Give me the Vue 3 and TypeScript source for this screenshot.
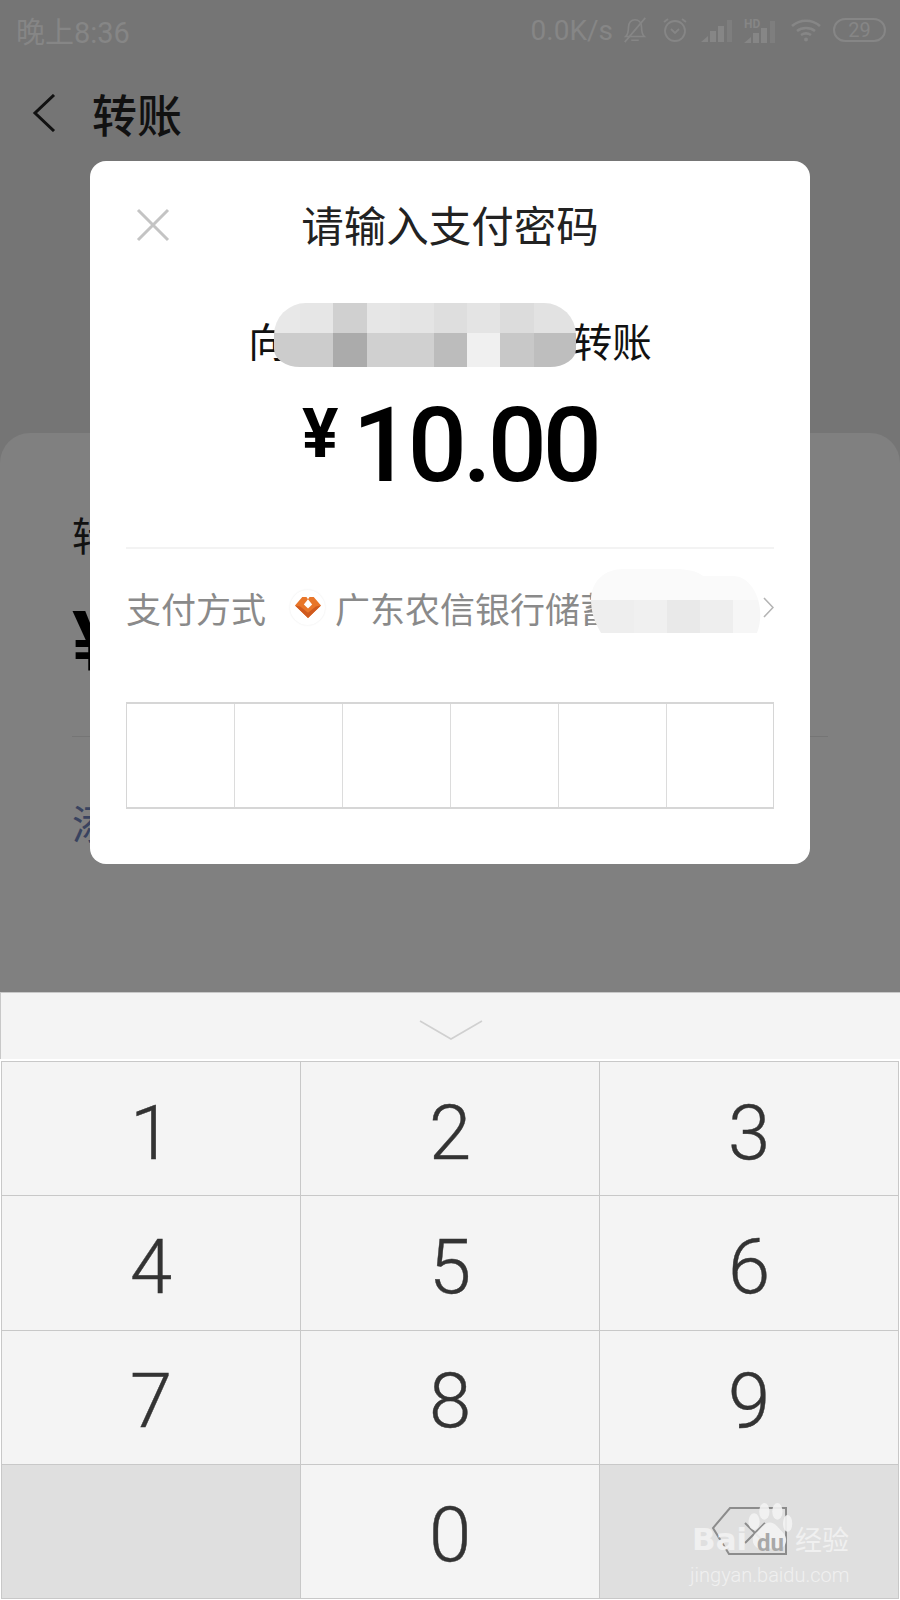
<template>
  <div class="page">
    <div class="screen">
      <div class="status-bar">
        <span class="status-time">晚上8:36</span>
        <div class="status-right">
          <span class="speed">0.0K/s</span>
          <svg width="28" height="28" viewBox="0 0 30 28" fill="none" stroke="#868686" stroke-width="1.800">
            <path d="M5 21c2-2 3-5 3-10s3-8 7-8 7 3 7 8 1 8 3 10z" />
            <path d="M11 25h8M4 27 26 1" />
          </svg>
          <svg width="28" height="28" viewBox="0 0 28 28" fill="none" stroke="#868686" stroke-width="1.800">
            <circle cx="14" cy="15" r="10" />
            <path d="M10 13l4 4 4-4M3 6l4-3M25 6l-4-3" />
          </svg>
          <svg width="31" height="23" viewBox="0 0 31 23" fill="#868686">
            <path d="M0 23l7-6v6zM9 23V12h6v11zM17 23V7h6v16z" />
            <path d="M26 23V1h5v22z" fill="#7e7e7e" />
          </svg>
          <svg width="31" height="25" viewBox="0 0 31 25" fill="#868686">
            <text x="0" y="10" font-size="12" font-weight="700" font-family="Roboto, sans-serif">HD</text>
            <path d="M0 25l7-6v6zM9 25V15h6v10zM17 25V10h6v15z" />
            <path d="M26 25V3h5v22z" fill="#7e7e7e" />
          </svg>
          <svg class="wifi" width="30" height="23" viewBox="0 0 30 23" fill="none" stroke="#868686" stroke-width="2.600">
            <path d="M1 7c8-7 20-7 28 0M6 12c5-4 13-4 18 0M10 16c3-2 7-2 10 0" />
            <circle cx="15" cy="20.500" r="2" fill="#868686" stroke="none" />
          </svg>
          <span class="battery">29</span>
        </div>
      </div>

      <div class="nav">
        <svg width="24" height="38" viewBox="0 0 24 38" fill="none" stroke="#111" stroke-width="3">
          <path d="M22 1 3 19l19 18" />
        </svg>
        <span class="nav-title">转账</span>
      </div>

      <div class="card">
        <div class="card-label">转账金额</div>
        <div class="card-amount">¥</div>
        <div class="card-line"></div>
        <div class="card-link">添加转账说明</div>
      </div>
    </div>

    <div class="modal">
      <div class="modal-header">
        <svg class="close" width="34" height="34" viewBox="0 0 34 34" fill="none" stroke="#c4c4c4" stroke-width="3">
          <path d="M2 2l30 30M32 2 2 32" />
        </svg>
        <span class="modal-title">请输入支付密码</span>
      </div>

      <div class="recipient">
        <span>向</span>
        <span class="recipient-gap"></span>
        <span>转账</span>
        <div class="mosaic-name">
          <i v-for="(c, i) in nameCells" :key="i" :style="{ background: c }"></i>
        </div>
      </div>

      <div class="amount">
        <span class="yen">¥</span>
        <span class="value">10.00</span>
      </div>

      <div class="modal-line"></div>

      <div class="pay-row">
        <span class="pay-label">支付方式</span>
        <span class="bank-logo">
          <svg width="26" height="21" viewBox="0 0 25 20">
            <path d="M7 0h4l1.500 2L14 0h4l7 8-12.500 12L0 8z" fill="#e8762a" />
            <path d="M0 8l12.500 12L25 8l-5 1-7.500 6L5 9z" fill="#cf5a1f" />
            <path d="M12.500 2l4 5-4 4-4-4z" fill="#fff" />
          </svg>
        </span>
        <span class="bank-name">广东农信银行储蓄卡</span>
        <svg class="pay-arrow" width="11" height="21" viewBox="0 0 11 21" fill="none" stroke="#b4b4b4" stroke-width="1.600">
          <path d="M1 1l9 9.500L1 20" />
        </svg>
        <svg class="mosaic-bank" width="172" height="64" viewBox="0 0 172 64">
          <defs>
            <clipPath id="bankClip">
              <path d="M10 64C3 52 0 42 0 31 0 12 14 0 32 0h52c12 0 22 2 28 7h30c20 0 34 30 24 57z" />
            </clipPath>
          </defs>
          <g clip-path="url(#bankClip)">
            <rect width="172" height="31" fill="#fafafa" />
            <rect y="31" width="43" height="33" fill="#eeeeee" />
            <rect x="43" y="31" width="33" height="33" fill="#f0f0f0" />
            <rect x="76" y="31" width="33" height="33" fill="#e9e9e9" />
            <rect x="109" y="31" width="33" height="33" fill="#eeeeee" />
            <rect x="142" y="31" width="30" height="33" fill="#f6f6f6" />
          </g>
        </svg>
      </div>

      <div class="pwd-box">
        <div v-for="n in 6" :key="n" class="pwd-cell"></div>
      </div>
    </div>

    <div class="keyboard">
      <div class="kb-handle">
        <svg width="64" height="20" viewBox="0 0 64 20" fill="none" stroke="#d0d0d0" stroke-width="1.600">
          <path d="M1 1l31 18L63 1" />
        </svg>
      </div>
      <div class="kb-grid">
        <div v-for="k in keys" :key="k.id" class="key" :class="{ 'key-dark': k.dark }">
          <span v-if="k.label" class="key-num">{{ k.label }}</span>
          <svg v-if="k.id === 'del'" width="76" height="50" viewBox="0 0 76 50" fill="none" stroke="#8c8c8c" stroke-width="2">
            <path d="M19 2h56v46H18L2 22z" />
            <path d="M34 17l20 20M54 17 34 37" />
          </svg>
        </div>
      </div>
      <div class="watermark">
        <div class="wm-main">
          <span class="wm-bai">Bai</span>
          <svg class="wm-paw" width="48" height="54" viewBox="0 0 48 58" fill="#f3f3f3" fill-opacity="0.9">
            <ellipse cx="8" cy="20" rx="6" ry="9" />
            <ellipse cx="19" cy="9" rx="5.500" ry="9" />
            <ellipse cx="33" cy="9" rx="5.500" ry="9" />
            <ellipse cx="44" cy="22" rx="5" ry="9" />
            <path d="M25 21c6 0 10 7 15 12 5 6 2 17-7 16H16c-9 0-12-10-7-16 6-5 9-12 16-12z" />
          </svg>
          <span class="wm-du">du</span>
          <span class="wm-cn">经验</span>
        </div>
        <div class="wm-url">jingyan.baidu.com</div>
      </div>
    </div>
  </div>
</template>

<script setup lang="ts">
const nameCells: string[] = [
  '#e8e8e8', '#e6e6e6', '#d0d0d0', '#e6e6e6', '#e4e4e4', '#dedede', '#e4e4e4', '#dcdcdc', '#e2e2e2',
  '#cccccc', '#cccccc', '#ababab', '#d0d0d0', '#d0d0d0', '#bcbcbc', '#f0f0f0', '#c8c8c8', '#bebebe',
]

const keys = [
  { id: '1', label: '1' },
  { id: '2', label: '2' },
  { id: '3', label: '3' },
  { id: '4', label: '4' },
  { id: '5', label: '5' },
  { id: '6', label: '6' },
  { id: '7', label: '7' },
  { id: '8', label: '8' },
  { id: '9', label: '9' },
  { id: 'empty', label: '', dark: true },
  { id: '0', label: '0' },
  { id: 'del', label: '', dark: true },
]
</script>

<style>
html,
body {
  margin: 0;
  background: #fff;
}
</style>

<style scoped>
.page {
  position: relative;
  width: 900px;
  height: 1600px;
  display: flex;
  flex-direction: column;
  overflow: hidden;
  font-family: Roboto, "Noto Sans CJK SC", sans-serif;
}

.screen {
  height: 992px;
  background: #757575;
  display: flex;
  flex-direction: column;
}

.status-bar {
  height: 60px;
  padding: 0 14px 0 16px;
  display: flex;
  align-items: center;
  justify-content: space-between;
  color: #868686;
}
.status-time {
  font-size: 29px;
}
.status-right {
  display: flex;
  align-items: center;
  gap: 12px;
}
.speed {
  font-size: 28px;
  margin-right: -4px;
}
.wifi {
  margin-left: 4px;
}
.battery {
  width: 53px;
  height: 24px;
  box-sizing: border-box;
  border: 2px solid #868686;
  border-radius: 12px;
  font-size: 20px;
  line-height: 20px;
  text-align: center;
}

.nav {
  height: 106px;
  padding-left: 32px;
  display: flex;
  align-items: center;
  gap: 36px;
}
.nav-title {
  font-size: 45px;
  font-weight: 500;
  color: #111;
}

.card {
  flex: 1;
  margin-top: 267px;
  padding: 80px 72px 0;
  background: #808080;
  border-radius: 30px 30px 0 0;
  color: #111;
}
.card-label {
  font-size: 40px;
  line-height: 50px;
}
.card-amount {
  margin-top: 38px;
  font-size: 84px;
  line-height: 84px;
  font-weight: 700;
  color: #000;
}
.card-line {
  margin-top: 51px;
  height: 1px;
  background: #757575;
}
.card-link {
  margin-top: 64px;
  font-size: 40px;
  line-height: 50px;
  color: #39435f;
}

.modal {
  position: absolute;
  left: 90px;
  top: 161px;
  width: 720px;
  height: 703px;
  box-sizing: border-box;
  padding: 0 36px;
  background: #fff;
  border-radius: 16px;
}
.modal-header {
  position: relative;
  height: 46px;
  margin-top: 44px;
  text-align: center;
}
.close {
  position: absolute;
  left: 10px;
  top: 3px;
}
.modal-title {
  font-size: 42.5px;
  line-height: 46px;
  color: #222;
}

.recipient {
  position: relative;
  margin-top: 60px;
  height: 56px;
  display: flex;
  justify-content: center;
  align-items: center;
  font-size: 39.5px;
  color: #111;
}
.recipient-gap {
  width: 285px;
}
.mosaic-name {
  position: absolute;
  left: 148px;
  top: -8px;
  width: 302px;
  height: 64px;
  display: grid;
  grid-template-columns: 26px repeat(7, 33.4px) 42px;
  grid-template-rows: 30px 34px;
  overflow: hidden;
  border-radius: 32px 32px 26px 26px / 32px 32px 18px 18px;
}
.mosaic-name i {
  display: block;
}

.amount {
  margin-top: 27px;
  height: 104px;
  display: flex;
  justify-content: center;
  align-items: center;
  color: #000;
  font-weight: 500;
}
.yen {
  font-size: 68px;
  margin: -24px 14px 0 0;
  font-weight: 700;
}
.value {
  font-size: 104px;
  line-height: 104px;
  letter-spacing: -4px;
}

.modal-line {
  margin-top: 49px;
  height: 2px;
  background: #f3f3f3;
}

.pay-row {
  position: relative;
  height: 116px;
  display: flex;
  align-items: center;
  font-size: 35px;
  color: #8a8a8a;
}
.pay-label {
  width: 139px;
  white-space: nowrap;
}
.bank-logo {
  width: 35px;
  height: 35px;
  margin: 0 10px 0 25px;
  flex: none;
  border-radius: 50%;
  box-shadow: 0 0 2px #e8e8e8;
  display: flex;
  align-items: center;
  justify-content: center;
}
.bank-name {
  flex: 1;
  overflow: hidden;
  white-space: nowrap;
}
.pay-arrow {
  flex: none;
}
.mosaic-bank {
  position: absolute;
  left: 465px;
  top: 20px;
}

.pwd-box {
  margin-top: 37px;
  height: 107px;
  box-sizing: border-box;
  display: grid;
  grid-template-columns: repeat(5, 108px) 1fr;
  border: 1px solid #d6d6d6;
  border-top-width: 2px;
  border-bottom-width: 2px;
}
.pwd-cell {
  border-right: 1px solid #dcdcdc;
}
.pwd-cell:last-child {
  border-right: 0;
}

.keyboard {
  position: relative;
  flex: 1;
  background: #fff;
}
.kb-handle {
  height: 67px;
  margin-bottom: 2px;
  box-sizing: border-box;
  border-top: 1px solid #c8c8c8;
  border-left: 1px solid #c8c8c8;
  background: #f4f4f4;
  display: flex;
  justify-content: center;
  padding-top: 27px;
}
.kb-grid {
  margin: 0 1px;
  height: 538px;
  box-sizing: border-box;
  display: grid;
  grid-template-columns: repeat(3, 1fr);
  grid-template-rows: repeat(4, 1fr);
  gap: 1px;
  padding: 1px;
  background: #c8c8c8;
}
.key {
  position: relative;
  background: #f4f4f4;
  display: flex;
  align-items: center;
  justify-content: center;
  font-size: 76px;
  font-weight: 300;
  color: #333;
}
.key-num {
  padding-top: 8px;
  -webkit-text-stroke: 0.4px #333;
}
.key-dark {
  background: #dfdfdf;
}
.watermark {
  position: absolute;
  left: 690px;
  top: 511px;
  width: 165px;
  color: #f0f0f0;
}
.wm-main {
  position: relative;
  height: 56px;
  display: flex;
  align-items: flex-end;
  font-weight: 700;
  white-space: nowrap;
}
.wm-bai {
  width: 62px;
  padding-left: 2px;
  box-sizing: border-box;
  font-family: "DejaVu Sans", sans-serif;
  font-size: 31px;
  line-height: 40px;
}
.wm-paw {
  position: absolute;
  left: 55px;
  top: 0;
}
.wm-du {
  position: relative;
  width: 28px;
  margin-left: 5px;
  font-size: 24px;
  line-height: 32px;
  color: #a8a8a8;
}
.wm-cn {
  font-size: 27px;
  line-height: 36px;
  font-weight: 400;
  margin-left: 10px;
}
.wm-url {
  font-size: 20px;
  font-weight: 300;
  line-height: 24px;
  margin-top: 4px;
  white-space: nowrap;
}
</style>
